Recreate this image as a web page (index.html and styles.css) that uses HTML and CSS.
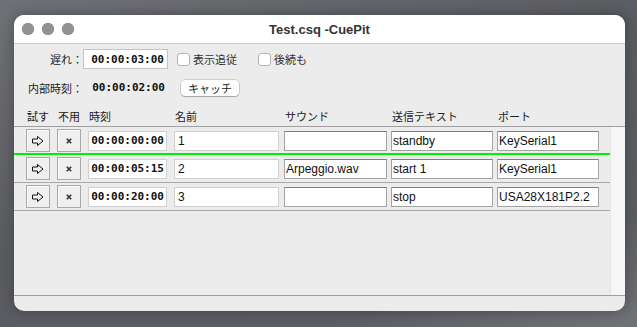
FILE: index.html
```html
<!DOCTYPE html>
<html lang="ja">
<head>
  <meta charset="UTF-8" />
  <title>Test.csq -CuePit</title>
  <link rel="stylesheet" href="styles.css">
</head>
<body>

  <div class="window">
    <div class="titlebar">
      <div class="lights">
        <span class="light"></span>
        <span class="light"></span>
        <span class="light"></span>
      </div>
      <div class="title">Test.csq -CuePit</div>
      <div></div>
    </div>

    <div class="controls">
      <div class="ctl-row">
        <span class="ctl-label">遅れ：</span>
        <input class="delay" value="00:00:03:00" />
        <label class="check first"><span class="box"></span>表示追従</label>
        <label class="check"><span class="box"></span>後続も</label>
      </div>
      <div class="ctl-row">
        <span class="ctl-label">内部時刻：</span>
        <span class="clock">00:00:02:00</span>
        <button class="catch">キャッチ</button>
      </div>
    </div>

    <div class="cols head">
      <span>試す</span>
      <span>不用</span>
      <span>時刻</span>
      <span>名前</span>
      <span>サウンド</span>
      <span>送信テキスト</span>
      <span>ポート</span>
    </div>

    <div class="list">
      <div class="rows" id="rows"></div>
      <div class="track"></div>
    </div>

    <div class="status"></div>
  </div>

  <script>
    const cues = [
      { time: '00:00:00:00', name: '1', sound: '', text: 'standby', port: 'KeySerial1' },
      { time: '00:00:05:15', name: '2', sound: 'Arpeggio.wav', text: 'start 1', port: 'KeySerial1' },
      { time: '00:00:20:00', name: '3', sound: '', text: 'stop', port: 'USA28X181P2.2' }
    ];

    const arrow = '<svg width="12" height="10" viewBox="0 0 12 10"><polygon points="0.5,3 5.5,3 5.5,0.5 11,5 5.5,9.5 5.5,7 0.5,7" fill="none" stroke="#111" stroke-width="1"/></svg>';
    const cross = '<svg width="6" height="6" viewBox="0 0 6 6"><path d="M0.8 0.8 L5.2 5.2 M5.2 0.8 L0.8 5.2" stroke="#333" stroke-width="1.6"/></svg>';

    const rows = document.getElementById('rows');
    cues.forEach(function (cue, i) {
      const row = document.createElement('div');
      row.className = 'cols row' + (i === 0 ? ' current' : '');
      row.innerHTML =
        '<button class="cell-btn">' + arrow + '</button>' +
        '<button class="cell-btn">' + cross + '</button>' +
        '<input class="time" value="' + cue.time + '" />' +
        '<input class="name" value="' + cue.name + '" />' +
        '<input class="sound" value="' + cue.sound + '" />' +
        '<input class="text" value="' + cue.text + '" />' +
        '<input class="port" value="' + cue.port + '" />';
      rows.appendChild(row);
    });
  </script>
</body>
</html>
```

FILE: styles.css
```css
body {
  margin: 0;
  height: 327px;
  overflow: hidden;
  background: linear-gradient(160deg, #707176 0%, #5b5c61 45%, #5d5e63 80%, #727377 100%);
  font-family: "Noto Sans CJK JP", "Liberation Sans", sans-serif;
  font-size: 11px;
  color: #222;
}

.window {
  margin: 15px 0 0 14px;
  width: 611px;
  height: 296px;
  border-radius: 10px;
  overflow: hidden;
  background: #ececec;
  display: flex;
  flex-direction: column;
  box-shadow: 0 0 14px rgba(0, 0, 0, 0.3);
}

.titlebar {
  height: 28px;
  flex: none;
  background: #fff;
  border-bottom: 1px solid #cbcbcb;
  display: grid;
  grid-template-columns: 1fr auto 1fr;
  align-items: center;
}
.lights { display: flex; gap: 8px; padding-left: 8px; }
.light {
  width: 12px;
  height: 12px;
  border-radius: 50%;
  background: #929292;
  box-shadow: inset 0 0 0 0.5px #808080;
}
.title {
  font-family: "Liberation Sans", sans-serif;
  font-weight: bold;
  font-size: 13px;
  color: #333;
}

.controls { padding-top: 5px; display: flex; flex-direction: column; gap: 9px; }
.ctl-row { display: flex; align-items: center; height: 20px; }
.ctl-label { width: 69px; text-align: right; flex: none; }

input {
  box-sizing: border-box;
  margin: 0;
  background: #fff;
  outline: none;
}
.delay, .clock {
  width: 85px;
  height: 20px;
  padding: 0 3px 0 0;
  text-align: right;
  font-family: "DejaVu Sans Mono", monospace;
  font-weight: bold;
  font-size: 11px;
  color: #111;
}
.delay { border: 1px solid #c4c4c4; }
.clock { box-sizing: border-box; line-height: 20px; }

.check { display: flex; align-items: center; gap: 3px; margin-left: 21px; color: #333; }
.check.first { margin-left: 9px; }
.box {
  width: 13px;
  height: 13px;
  box-sizing: border-box;
  background: #fff;
  border: 1px solid #b4b4b4;
  border-radius: 3px;
}

.catch {
  margin-left: 13px;
  width: 58px;
  height: 16px;
  padding: 0;
  border: none;
  border-radius: 4px;
  background: #fff;
  box-shadow: 0 0 0 0.5px rgba(0, 0, 0, 0.25), 0 1px 1px rgba(0, 0, 0, 0.2);
  font-family: "Noto Sans CJK JP", sans-serif;
  font-size: 11px;
  color: #222;
}

.cols {
  display: grid;
  grid-template-columns: 31px 31px 86px 110px 107px 106px 102px;
  align-items: center;
  padding-left: 12px;
}
.head {
  margin-top: 2px;
  height: 27px;
  box-sizing: border-box;
  padding-top: 5px;
  border-bottom: 1px solid #9f9f9f;
  flex: none;
}
.head span { padding-left: 1px; }

.list { flex: 1; display: flex; }
.rows { flex: 1; }
.track { width: 14px; background: #f6f6f6; border-left: 1px solid #e6e6e6; }

.row {
  height: 28px;
  box-sizing: border-box;
  border-bottom: 1px solid #a8a8a8;
}
.row.current {
  border-bottom-color: #00f000;
  box-shadow: inset 0 -1px 0 #00f000;
}

.cell-btn {
  width: 24px;
  height: 23px;
  padding: 0;
  display: flex;
  align-items: center;
  justify-content: center;
  background: #efefef;
  border: 1px solid #a9a9a9;
  box-shadow: inset 1px 1px 0 #fafafa;
}

.row input {
  height: 20px;
  border: 1px solid #a4a4a4;
  border-top-color: #7e7e7e;
  font-family: "Liberation Sans", sans-serif;
  font-size: 12px;
  color: #111;
  padding: 0 0 0 1px;
}
.row .time {
  width: 79px;
  border-color: #d0d0d0;
  text-align: right;
  padding: 0 2px 0 0;
  font-family: "DejaVu Sans Mono", monospace;
  font-weight: bold;
  font-size: 11px;
}
.row .name { width: 105px; padding-left: 3px; border-color: #d0d0d0; }
.row .sound { width: 103px; }
.row .text { width: 102px; }
.row .port { width: 102px; }

.status { height: 16px; flex: none; box-sizing: border-box; border-top: 1px solid #9f9f9f; }
```
